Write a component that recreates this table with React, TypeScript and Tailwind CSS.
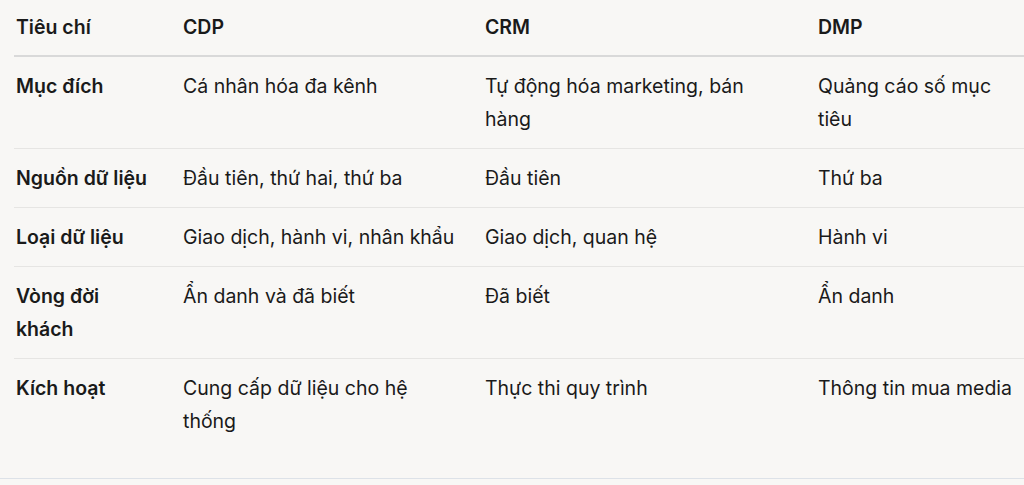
import React from "react";

const rows: [string, string, string, string][] = [
  ["Mục đích", "Cá nhân hóa đa kênh", "Tự động hóa marketing, bán hàng", "Quảng cáo số mục tiêu"],
  ["Nguồn dữ liệu", "Đầu tiên, thứ hai, thứ ba", "Đầu tiên", "Thứ ba"],
  ["Loại dữ liệu", "Giao dịch, hành vi, nhân khẩu", "Giao dịch, quan hệ", "Hành vi"],
  ["Vòng đời khách", "Ẩn danh và đã biết", "Đã biết", "Ẩn danh"],
  ["Kích hoạt", "Cung cấp dữ liệu cho hệ thống", "Thực thi quy trình", "Thông tin mua media"],
];

export default function App() {
  return (
    <div
      className="w-[1024px] h-[485px] overflow-hidden bg-[#f8f7f5] text-[#1a1a1a]"
      style={{ fontFamily: "Inter, 'Noto Sans', sans-serif" }}
    >
      <div className="pb-[28px] border-b border-[#dde2e8]">
        <div className="ml-[14px] w-[1100px] text-[19.5px] leading-[33px]">
          <div className="grid grid-cols-[169px_302px_333px_296px] border-b-2 border-[#d9d9d9] pt-[10.5px] pb-[11.5px] font-semibold">
            <div className="pl-[2px]">Tiêu chí</div>
            <div>CDP</div>
            <div>CRM</div>
            <div>DMP</div>
          </div>
          {rows.map((r, i) => (
            <div
              key={i}
              className={`grid grid-cols-[169px_302px_333px_296px] pt-[13px] pb-[12px] ${
                i < rows.length - 1 ? "border-b border-[#e6e5e3]" : ""
              }`}
            >
              <div className="pl-[2px] pr-[28px] font-semibold">{r[0]}</div>
              <div className="pr-[24px]">{r[1]}</div>
              <div className="pr-[40px]">{r[2]}</div>
              <div className="w-[205px]">{r[3]}</div>
            </div>
          ))}
        </div>
      </div>
    </div>
  );
}
